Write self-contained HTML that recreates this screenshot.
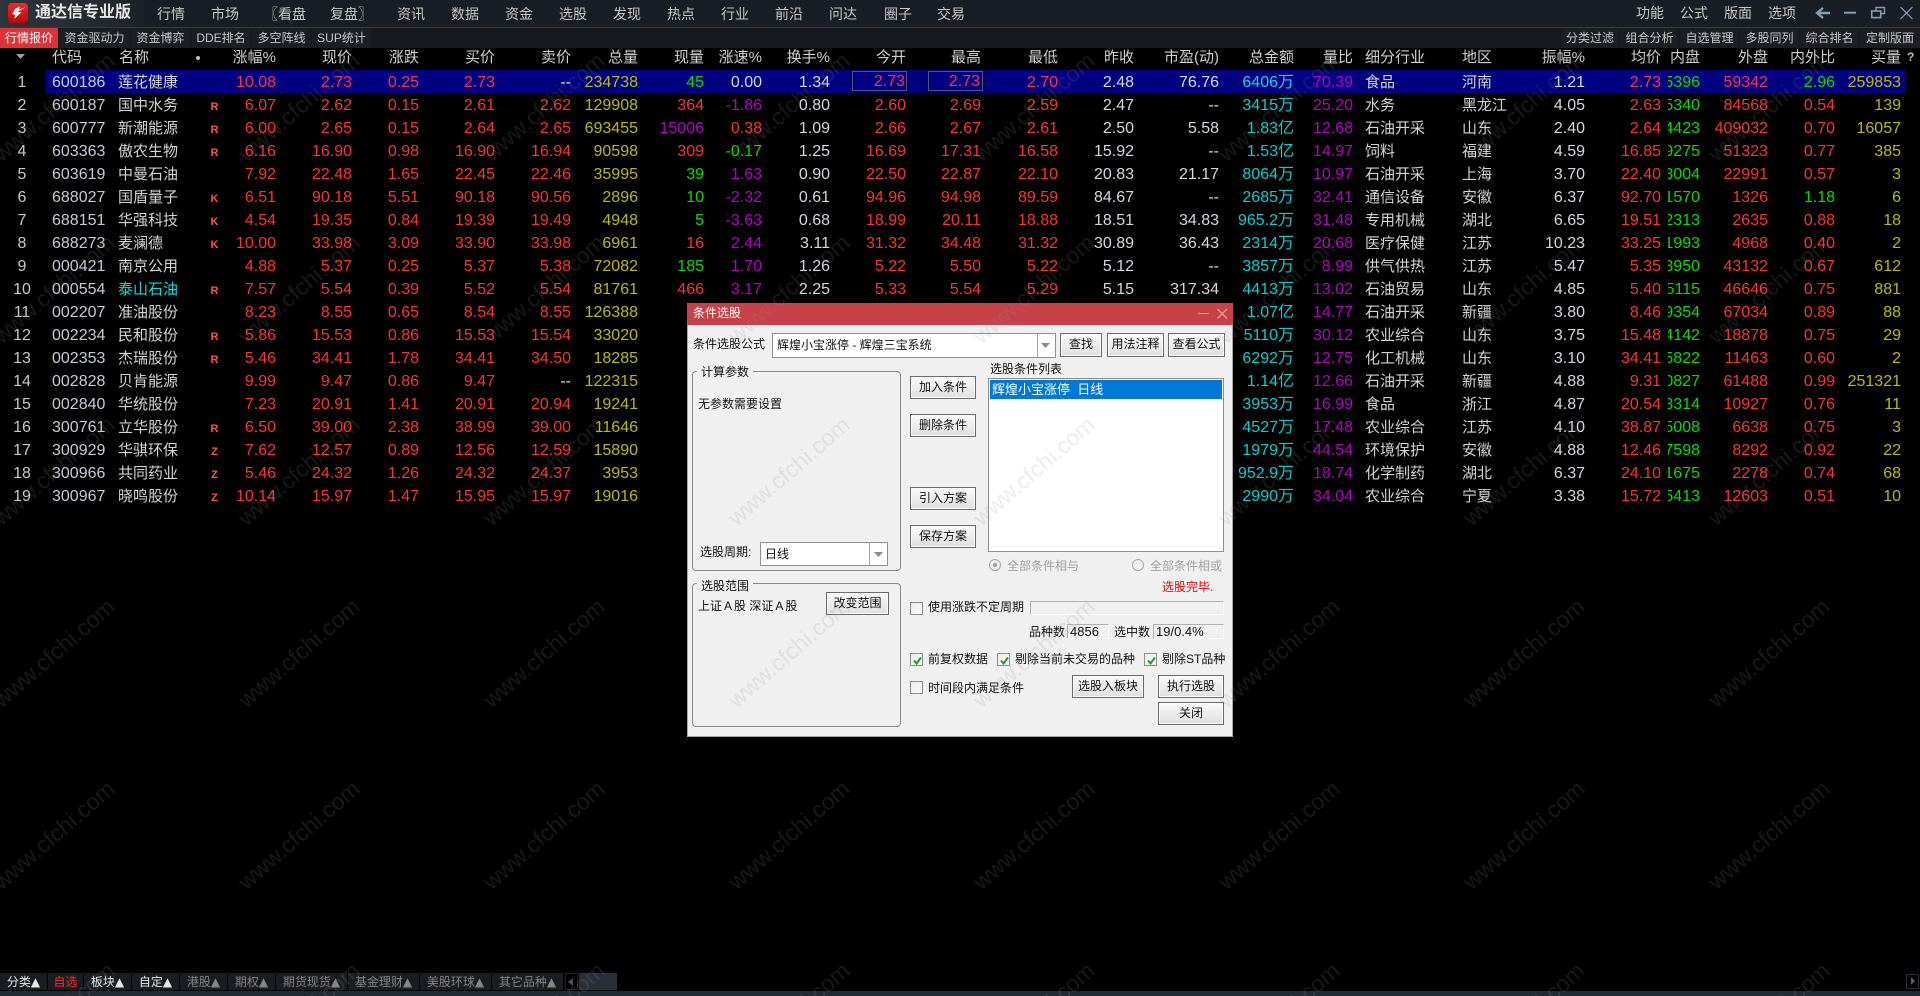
<!DOCTYPE html>
<html lang="zh"><head><meta charset="utf-8"><title>通达信专业版</title>
<style>
html,body{margin:0;padding:0;background:#000;width:1920px;height:996px;overflow:hidden}
*{box-sizing:border-box}
body{position:relative;font-family:"Liberation Sans","Noto Sans CJK SC",sans-serif;color:#ccc}
.a{position:absolute;white-space:nowrap}
.m{position:absolute;top:4px;font-size:14px;line-height:20px;color:#c8c8c8;white-space:nowrap}
.t{position:absolute;top:28px;height:20px;background:#1b1e23;color:#c8c8c8;font-size:12px;line-height:20px;text-align:center;white-space:nowrap}
table{position:absolute;left:0;top:45px;width:1920px;border-collapse:collapse;table-layout:fixed}
th,td{padding:0;height:23px;line-height:23px;font-size:16px;font-weight:normal;text-align:right;white-space:nowrap}
th{height:26px;line-height:25px;font-size:15px;color:#cfcfcf;vertical-align:top}
td:nth-child(1){text-align:center;color:#c8c8c8}
td:nth-child(2){color:#c4ccd4;text-align:left;padding-left:8px}
td:nth-child(3){color:#d4d4d4;font-size:15px;text-align:left;padding-left:2px}
td:nth-child(4){color:#ff5050;font-size:11px;font-weight:bold;text-align:center;position:relative;top:2px}
td:nth-child(5),td:nth-child(6),td:nth-child(7),td:nth-child(8),td:nth-child(9),td:nth-child(14),td:nth-child(15),td:nth-child(16),td:nth-child(24),td:nth-child(26),td:nth-child(27){color:#ff3232}
td:nth-child(10),td:nth-child(28){color:#bcbc00}
td:nth-child(13),td:nth-child(17),td:nth-child(18),td:nth-child(23){color:#d4d8dc}
td:nth-child(19){color:#00d2d2}
td:nth-child(20){color:#b400c4}
td:nth-child(21){color:#d4d4d4;font-size:15px;text-align:left;padding-left:12px}
td:nth-child(22){color:#d4d4d4;font-size:15px;text-align:left;padding-left:0}
td:nth-child(25){color:#00e000;padding-left:7px}
td i{display:block;font-style:normal;width:32px;overflow:hidden;direction:rtl}
th.l{text-align:left}
td.R{color:#ff3232!important}td.G{color:#00e000!important}td.P{color:#b400c4!important}td.W{color:#d4d8dc!important}
tr.s td:nth-child(5),tr.s td:nth-child(6),tr.s td:nth-child(7),tr.s td:nth-child(8),tr.s td:nth-child(14),tr.s td:nth-child(15),tr.s td:nth-child(16),tr.s td:nth-child(24),tr.s td:nth-child(26){color:#ff3050}
tr.s td:nth-child(14),tr.s td:nth-child(15){position:relative;top:-1px;padding-right:1px}
tr.s td:nth-child(19){color:#00d8f0}
.c{color:#00e0e0!important}
.d{position:absolute;left:687px;top:303px;width:546px;height:434px;background:#f0f0f0;border:1px solid #a8a8a8;border-top:0}
.x{position:absolute;font-size:12px;line-height:20px;height:20px;color:#111;white-space:nowrap}
.b{position:absolute;border:1px solid #6a6a6a;box-shadow:inset 0 0 0 1px #fbfbfb;background:linear-gradient(#fafafa,#dfdfdf);text-align:center;font-size:12px;color:#111;white-space:nowrap}
.g{position:absolute;border:1px solid #8a8a8a;border-radius:4px}
.gl{position:absolute;background:#f0f0f0;padding:0 4px;font-size:12px;line-height:14px;color:#111;white-space:nowrap}
.w{position:absolute;background:#fff;border:1px solid #8f8f8f;font-size:12px;color:#111;white-space:nowrap}
.ck{position:absolute;width:13px;height:13px;border:1px solid #8d8d8d;background:linear-gradient(135deg,#ececec,#fafafa)}
.ck svg{position:absolute;left:1px;top:1px}
.f{position:absolute;border:1px solid;border-color:#b0b0b0 #fafafa #fafafa #b0b0b0;background:#f0f0f0;font-size:13px;line-height:14px;color:#111;padding-left:2px;white-space:nowrap}
.q{position:absolute;top:973px;height:17px;background:#1a1c21;font-size:12px;line-height:18px;text-align:center;color:#858585;white-space:nowrap}
.q b{font-family:"DejaVu Sans",sans-serif;font-weight:normal;font-size:12px}
</style></head><body>

<!-- top bar -->
<div class="a" style="left:0;top:0;width:1920px;height:27px;background:#191d25"></div>
<div class="a" style="left:0;top:0;width:144px;height:27px;background:linear-gradient(90deg,#2f343c,#252930 70%,#1c2028)"></div>
<div class="a" style="left:0;top:27px;width:1920px;height:1px;background:#363a41"></div>
<svg class="a" style="left:0;top:0" width="34" height="27" viewBox="0 0 34 27">
<defs><linearGradient id="lg" x1="0" y1="0" x2="0" y2="1"><stop offset="0" stop-color="#f02a2a"/><stop offset="1" stop-color="#b80a0a"/></linearGradient></defs>
<rect x="8" y="3" width="20" height="20" rx="4" fill="url(#lg)"/>
<path d="M26 7 L19 9.6 L19.8 6.6 L15.2 8.8 L12.2 14 L15.4 15 L14 19 L21.4 12.4 L17.4 12 Z" fill="#fff"/>
</svg>
<div class="a" style="left:35px;top:3px;font-size:16px;line-height:20px;font-weight:bold;color:#e6e6e6">通达信专业版</div>
<span class="m" style="left:157px">行情</span><span class="m" style="left:211px">市场</span><span class="m" style="left:264px">〖看盘</span><span class="m" style="left:330px">复盘〗</span><span class="m" style="left:397px">资讯</span><span class="m" style="left:451px">数据</span><span class="m" style="left:505px">资金</span><span class="m" style="left:559px">选股</span><span class="m" style="left:613px">发现</span><span class="m" style="left:667px">热点</span><span class="m" style="left:721px">行业</span><span class="m" style="left:775px">前沿</span><span class="m" style="left:829px">问达</span><span class="m" style="left:884px">圈子</span><span class="m" style="left:937px">交易</span>
<span class="m" style="left:1636px;top:3px">功能</span><span class="m" style="left:1680px;top:3px">公式</span><span class="m" style="left:1724px;top:3px">版面</span><span class="m" style="left:1768px;top:3px">选项</span>
<svg class="a" style="left:1810px;top:0" width="110" height="27" viewBox="1810 0 110 27" fill="none" stroke="#8a9db0">
<path d="M1830 13H1817M1823 8L1817 13L1823 18" stroke-width="2.4"/>
<path d="M1844 12.7H1856" stroke-width="2"/>
<path d="M1876 10.5V7.5H1884.5V13.5H1881" stroke-width="1.4"/><rect x="1871.7" y="11" width="9" height="6.6" stroke-width="1.6"/>
<path d="M1900.5 7L1912.5 19M1912.5 7L1900.5 19" stroke-width="1.2"/>
</svg>

<!-- second bar -->
<div class="a" style="left:0;top:28px;width:1920px;height:20px;background:#17191e"></div>
<div class="t" style="left:0;width:58px;background:#dd3338;color:#fff">行情报价</div>
<div class="t" style="left:59px;width:71px">资金驱动力</div>
<div class="t" style="left:131px;width:59px">资金博弈</div>
<div class="t" style="left:191px;width:60px">DDE排名</div>
<div class="t" style="left:252px;width:59px">多空阵线</div>
<div class="t" style="left:312px;width:59px">SUP统计</div>
<div class="t" style="left:1561px;width:58px">分类过滤</div>
<div class="t" style="left:1620px;width:59px">组合分析</div>
<div class="t" style="left:1680px;width:59px">自选管理</div>
<div class="t" style="left:1740px;width:59px">多股同列</div>
<div class="t" style="left:1800px;width:59px">综合排名</div>
<div class="t" style="left:1860px;width:60px">定制版面</div>

<!-- grid -->
<div class="a" style="left:45px;top:70px;width:1861px;height:23px;background:#000080"></div>
<div class="a" style="left:852px;top:71px;width:55px;height:20px;border:1px solid #50586a"></div>
<div class="a" style="left:928px;top:71px;width:55px;height:20px;border:1px solid #50586a"></div>
<svg class="a" style="left:16px;top:54px" width="10" height="6"><path d="M0 0H9L4.5 5Z" fill="#a0a0a0"/></svg>
<div class="a" style="left:196px;top:56px;width:4px;height:4px;border-radius:2px;background:#c0c0c0"></div>
<div class="a" style="left:1907px;top:49px;font-size:12px;line-height:16px;color:#c0c0c0;font-weight:bold">?</div>

<table>
<colgroup><col style="width:44px"><col style="width:72px"><col style="width:89px"><col style="width:19px"><col style="width:52px"><col style="width:76px"><col style="width:67px"><col style="width:76px"><col style="width:76px"><col style="width:67px"><col style="width:66px"><col style="width:58px"><col style="width:68px"><col style="width:76px"><col style="width:75px"><col style="width:77px"><col style="width:76px"><col style="width:85px"><col style="width:75px"><col style="width:59px"><col style="width:109px"><col style="width:78px"><col style="width:45px"><col style="width:76px"><col style="width:39px"><col style="width:68px"><col style="width:67px"><col style="width:66px"><col style="width:19px"></colgroup>
<tr><th></th><th class="l" style="padding-left:8px">代码</th><th class="l" style="padding-left:3px">名称</th><th></th><th>涨幅%</th><th>现价</th><th>涨跌</th><th>买价</th><th>卖价</th><th>总量</th><th>现量</th><th>涨速%</th><th>换手%</th><th>今开</th><th>最高</th><th>最低</th><th>昨收</th><th>市盈(动)</th><th>总金额</th><th>量比</th><th class="l" style="padding-left:12px">细分行业</th><th class="l">地区</th><th>振幅%</th><th>均价</th><th>内盘</th><th>外盘</th><th>内外比</th><th>买量</th><th></th></tr>
<tr class="s"><td>1</td><td>600186</td><td>莲花健康</td><td></td><td>10.08</td><td>2.73</td><td>0.25</td><td>2.73</td><td class="W">--</td><td>234738</td><td class="G">45</td><td class="W">0.00</td><td>1.34</td><td>2.73</td><td>2.73</td><td>2.70</td><td>2.48</td><td>76.76</td><td>6406万</td><td>70.39</td><td>食品</td><td>河南</td><td>1.21</td><td>2.73</td><td><i>5396</i></td><td>59342</td><td class="G">2.96</td><td>259853</td><td></td></tr>
<tr><td>2</td><td>600187</td><td>国中水务</td><td>R</td><td>6.07</td><td>2.62</td><td>0.15</td><td>2.61</td><td>2.62</td><td>129908</td><td class="R">364</td><td class="P">-1.86</td><td>0.80</td><td>2.60</td><td>2.69</td><td>2.59</td><td>2.47</td><td>--</td><td>3415万</td><td>25.20</td><td>水务</td><td>黑龙江</td><td>4.05</td><td>2.63</td><td><i>5340</i></td><td>84568</td><td>0.54</td><td>139</td><td></td></tr>
<tr><td>3</td><td>600777</td><td>新潮能源</td><td>R</td><td>6.00</td><td>2.65</td><td>0.15</td><td>2.64</td><td>2.65</td><td>693455</td><td class="P">15006</td><td class="R">0.38</td><td>1.09</td><td>2.66</td><td>2.67</td><td>2.61</td><td>2.50</td><td>5.58</td><td>1.83亿</td><td>12.68</td><td>石油开采</td><td>山东</td><td>2.40</td><td>2.64</td><td><i>4423</i></td><td>409032</td><td>0.70</td><td>16057</td><td></td></tr>
<tr><td>4</td><td>603363</td><td>傲农生物</td><td>R</td><td>6.16</td><td>16.90</td><td>0.98</td><td>16.90</td><td>16.94</td><td>90598</td><td class="R">309</td><td class="G">-0.17</td><td>1.25</td><td>16.69</td><td>17.31</td><td>16.58</td><td>15.92</td><td>--</td><td>1.53亿</td><td>14.97</td><td>饲料</td><td>福建</td><td>4.59</td><td>16.85</td><td><i>9275</i></td><td>51323</td><td>0.77</td><td>385</td><td></td></tr>
<tr><td>5</td><td>603619</td><td>中曼石油</td><td></td><td>7.92</td><td>22.48</td><td>1.65</td><td>22.45</td><td>22.46</td><td>35995</td><td class="G">39</td><td class="P">1.63</td><td>0.90</td><td>22.50</td><td>22.87</td><td>22.10</td><td>20.83</td><td>21.17</td><td>8064万</td><td>10.97</td><td>石油开采</td><td>上海</td><td>3.70</td><td>22.40</td><td><i>3004</i></td><td>22991</td><td>0.57</td><td>3</td><td></td></tr>
<tr><td>6</td><td>688027</td><td>国盾量子</td><td>K</td><td>6.51</td><td>90.18</td><td>5.51</td><td>90.18</td><td>90.56</td><td>2896</td><td class="G">10</td><td class="P">-2.32</td><td>0.61</td><td>94.96</td><td>94.98</td><td>89.59</td><td>84.67</td><td>--</td><td>2685万</td><td>32.41</td><td>通信设备</td><td>安徽</td><td>6.37</td><td>92.70</td><td><i>1570</i></td><td>1326</td><td class="G">1.18</td><td>6</td><td></td></tr>
<tr><td>7</td><td>688151</td><td>华强科技</td><td>K</td><td>4.54</td><td>19.35</td><td>0.84</td><td>19.39</td><td>19.49</td><td>4948</td><td class="G">5</td><td class="P">-3.63</td><td>0.68</td><td>18.99</td><td>20.11</td><td>18.88</td><td>18.51</td><td>34.83</td><td>965.2万</td><td>31.48</td><td>专用机械</td><td>湖北</td><td>6.65</td><td>19.51</td><td><i>2313</i></td><td>2635</td><td>0.88</td><td>18</td><td></td></tr>
<tr><td>8</td><td>688273</td><td>麦澜德</td><td>K</td><td>10.00</td><td>33.98</td><td>3.09</td><td>33.90</td><td>33.98</td><td>6961</td><td class="R">16</td><td class="P">2.44</td><td>3.11</td><td>31.32</td><td>34.48</td><td>31.32</td><td>30.89</td><td>36.43</td><td>2314万</td><td>20.68</td><td>医疗保健</td><td>江苏</td><td>10.23</td><td>33.25</td><td><i>1993</i></td><td>4968</td><td>0.40</td><td>2</td><td></td></tr>
<tr><td>9</td><td>000421</td><td>南京公用</td><td></td><td>4.88</td><td>5.37</td><td>0.25</td><td>5.37</td><td>5.38</td><td>72082</td><td class="G">185</td><td class="P">1.70</td><td>1.26</td><td>5.22</td><td>5.50</td><td>5.22</td><td>5.12</td><td>--</td><td>3857万</td><td>8.99</td><td>供气供热</td><td>江苏</td><td>5.47</td><td>5.35</td><td><i>3950</i></td><td>43132</td><td>0.67</td><td>612</td><td></td></tr>
<tr><td>10</td><td>000554</td><td class="c">泰山石油</td><td>R</td><td>7.57</td><td>5.54</td><td>0.39</td><td>5.52</td><td>5.54</td><td>81761</td><td class="R">466</td><td class="P">3.17</td><td>2.25</td><td>5.33</td><td>5.54</td><td>5.29</td><td>5.15</td><td>317.34</td><td>4413万</td><td>13.02</td><td>石油贸易</td><td>山东</td><td>4.85</td><td>5.40</td><td><i>5115</i></td><td>46646</td><td>0.75</td><td>881</td><td></td></tr>
<tr><td>11</td><td>002207</td><td>准油股份</td><td></td><td>8.23</td><td>8.55</td><td>0.65</td><td>8.54</td><td>8.55</td><td>126388</td><td class="P">7</td><td></td><td></td><td></td><td></td><td></td><td></td><td></td><td>1.07亿</td><td>14.77</td><td>石油开采</td><td>新疆</td><td>3.80</td><td>8.46</td><td><i>9354</i></td><td>67034</td><td>0.89</td><td>88</td><td></td></tr>
<tr><td>12</td><td>002234</td><td>民和股份</td><td>R</td><td>5.86</td><td>15.53</td><td>0.86</td><td>15.53</td><td>15.54</td><td>33020</td><td></td><td></td><td></td><td></td><td></td><td></td><td></td><td></td><td>5110万</td><td>30.12</td><td>农业综合</td><td>山东</td><td>3.75</td><td>15.48</td><td><i>4142</i></td><td>18878</td><td>0.75</td><td>29</td><td></td></tr>
<tr><td>13</td><td>002353</td><td>杰瑞股份</td><td>R</td><td>5.46</td><td>34.41</td><td>1.78</td><td>34.41</td><td>34.50</td><td>18285</td><td></td><td></td><td></td><td></td><td></td><td></td><td></td><td></td><td>6292万</td><td>12.75</td><td>化工机械</td><td>山东</td><td>3.10</td><td>34.41</td><td><i>5822</i></td><td>11463</td><td>0.60</td><td>2</td><td></td></tr>
<tr><td>14</td><td>002828</td><td>贝肯能源</td><td></td><td>9.99</td><td>9.47</td><td>0.86</td><td>9.47</td><td class="W">--</td><td>122315</td><td></td><td></td><td></td><td></td><td></td><td></td><td></td><td></td><td>1.14亿</td><td>12.66</td><td>石油开采</td><td>新疆</td><td>4.88</td><td>9.31</td><td><i>0827</i></td><td>61488</td><td>0.99</td><td>251321</td><td></td></tr>
<tr><td>15</td><td>002840</td><td>华统股份</td><td></td><td>7.23</td><td>20.91</td><td>1.41</td><td>20.91</td><td>20.94</td><td>19241</td><td class="R">2</td><td></td><td></td><td></td><td></td><td></td><td></td><td></td><td>3953万</td><td>16.99</td><td>食品</td><td>浙江</td><td>4.87</td><td>20.54</td><td><i>3314</i></td><td>10927</td><td>0.76</td><td>11</td><td></td></tr>
<tr><td>16</td><td>300761</td><td>立华股份</td><td>R</td><td>6.50</td><td>39.00</td><td>2.38</td><td>38.99</td><td>39.00</td><td>11646</td><td></td><td></td><td></td><td></td><td></td><td></td><td></td><td></td><td>4527万</td><td>17.48</td><td>农业综合</td><td>江苏</td><td>4.10</td><td>38.87</td><td><i>5008</i></td><td>6638</td><td>0.75</td><td>3</td><td></td></tr>
<tr><td>17</td><td>300929</td><td>华骐环保</td><td>Z</td><td>7.62</td><td>12.57</td><td>0.89</td><td>12.56</td><td>12.59</td><td>15890</td><td></td><td></td><td></td><td></td><td></td><td></td><td></td><td></td><td>1979万</td><td>44.54</td><td>环境保护</td><td>安徽</td><td>4.88</td><td>12.46</td><td><i>7598</i></td><td>8292</td><td>0.92</td><td>22</td><td></td></tr>
<tr><td>18</td><td>300966</td><td>共同药业</td><td>Z</td><td>5.46</td><td>24.32</td><td>1.26</td><td>24.32</td><td>24.37</td><td>3953</td><td></td><td></td><td></td><td></td><td></td><td></td><td></td><td></td><td>952.9万</td><td>18.74</td><td>化学制药</td><td>湖北</td><td>6.37</td><td>24.10</td><td><i>1675</i></td><td>2278</td><td>0.74</td><td>68</td><td></td></tr>
<tr><td>19</td><td>300967</td><td>晓鸣股份</td><td>Z</td><td>10.14</td><td>15.97</td><td>1.47</td><td>15.95</td><td>15.97</td><td>19016</td><td class="R">1</td><td></td><td></td><td></td><td></td><td></td><td></td><td></td><td>2990万</td><td>34.04</td><td>农业综合</td><td>宁夏</td><td>3.38</td><td>15.72</td><td><i>5413</i></td><td>12603</td><td>0.51</td><td>10</td><td></td></tr>
</table>

<!-- dialog -->
<div class="d"></div>
<div class="a" style="left:687px;top:303px;width:546px;height:22px;background:#c84148"></div>
<div class="a" style="left:693px;top:303px;font-size:12px;line-height:21px;color:#fff">条件选股</div>
<svg class="a" style="left:1190px;top:303px" width="43" height="22" fill="none" stroke="#e8b8bb"><path d="M8 10.5H18.5"/><path d="M27.5 6L37 15.5M37 6L27.5 15.5"/></svg>

<div class="x" style="left:693px;top:334px">条件选股公式</div>
<div class="w" style="left:772px;top:333px;width:284px;height:25px;line-height:23px;padding-left:4px">辉煌小宝涨停 - 辉煌三宝系统</div>
<div class="a" style="left:1037px;top:334px;width:1px;height:23px;background:#a8a8a8"></div>
<svg class="a" style="left:1041px;top:343px" width="10" height="6"><path d="M0 0H9L4.5 5Z" fill="#8a8a8a"/></svg>
<div class="b" style="left:1060px;top:333px;width:42px;height:24px;line-height:21px">查找</div>
<div class="b" style="left:1107px;top:333px;width:57px;height:24px;line-height:21px">用法注释</div>
<div class="b" style="left:1168px;top:333px;width:57px;height:24px;line-height:21px">查看公式</div>

<div class="g" style="left:692px;top:371px;width:209px;height:200px"></div>
<div class="gl" style="left:697px;top:365px">计算参数</div>
<div class="x" style="left:698px;top:394px">无参数需要设置</div>
<div class="x" style="left:700px;top:542px">选股周期:</div>
<div class="w" style="left:760px;top:542px;width:128px;height:24px;line-height:22px;padding-left:4px">日线</div>
<div class="a" style="left:869px;top:543px;width:1px;height:22px;background:#a8a8a8"></div>
<svg class="a" style="left:874px;top:552px" width="10" height="6"><path d="M0 0H9L4.5 5Z" fill="#8a8a8a"/></svg>

<div class="g" style="left:692px;top:583px;width:209px;height:144px"></div>
<div class="gl" style="left:697px;top:579px">选股范围</div>
<div class="x" style="left:698px;top:596px">上证<span style="margin:0 2px">A</span>股 深证<span style="margin:0 2px">A</span>股</div>
<div class="b" style="left:826px;top:592px;width:63px;height:23px;line-height:20px">改变范围</div>

<div class="b" style="left:910px;top:376px;width:66px;height:23px;line-height:20px">加入条件</div>
<div class="b" style="left:910px;top:414px;width:66px;height:23px;line-height:20px">删除条件</div>
<div class="b" style="left:910px;top:487px;width:66px;height:23px;line-height:20px">引入方案</div>
<div class="b" style="left:910px;top:525px;width:66px;height:23px;line-height:20px">保存方案</div>

<div class="x" style="left:990px;top:359px">选股条件列表</div>
<div class="w" style="left:988px;top:378px;width:236px;height:174px"></div>
<div class="a" style="left:990px;top:380px;width:232px;height:19px;background:#0078d7;color:#fff;font-size:13px;line-height:19px;padding-left:2px">辉煌小宝涨停&nbsp; 日线</div>

<svg class="a" style="left:988px;top:558px" width="14" height="14"><circle cx="7" cy="7" r="5.5" fill="#f0f0f0" stroke="#a8a8a8"/><circle cx="7" cy="7" r="2.2" fill="#a0a0a0"/></svg>
<div class="x" style="left:1007px;top:556px;color:#a0a0a0">全部条件相与</div>
<svg class="a" style="left:1131px;top:558px" width="14" height="14"><circle cx="7" cy="7" r="5.5" fill="#f0f0f0" stroke="#a8a8a8"/></svg>
<div class="x" style="left:1150px;top:556px;color:#a0a0a0">全部条件相或</div>
<div class="x" style="left:1162px;top:577px;color:#f00000">选股完毕.</div>

<div class="ck" style="left:910px;top:602px"></div>
<div class="x" style="left:928px;top:597px">使用涨跌不定周期</div>
<div class="f" style="left:1030px;top:601px;width:194px;height:14px"></div>
<div class="x" style="left:1029px;top:622px">品种数</div>
<div class="f" style="left:1067px;top:624px;width:42px;height:15px">4856</div>
<div class="x" style="left:1114px;top:622px">选中数</div>
<div class="f" style="left:1153px;top:624px;width:71px;height:15px">19/0.4%</div>

<div class="ck" style="left:910px;top:653px"><svg width="11" height="11"><path d="M2 5.5L4.5 8.5L9 2.5" fill="none" stroke="#1a9e2c" stroke-width="2"/></svg></div>
<div class="x" style="left:928px;top:649px">前复权数据</div>
<div class="ck" style="left:997px;top:653px"><svg width="11" height="11"><path d="M2 5.5L4.5 8.5L9 2.5" fill="none" stroke="#1a9e2c" stroke-width="2"/></svg></div>
<div class="x" style="left:1015px;top:649px">剔除当前未交易的品种</div>
<div class="ck" style="left:1144px;top:653px"><svg width="11" height="11"><path d="M2 5.5L4.5 8.5L9 2.5" fill="none" stroke="#1a9e2c" stroke-width="2"/></svg></div>
<div class="x" style="left:1162px;top:649px">剔除ST品种</div>
<div class="ck" style="left:910px;top:681px"></div>
<div class="x" style="left:928px;top:678px">时间段内满足条件</div>
<div class="b" style="left:1072px;top:675px;width:72px;height:23px;line-height:20px">选股入板块</div>
<div class="b" style="left:1158px;top:675px;width:66px;height:23px;line-height:20px">执行选股</div>
<div class="b" style="left:1158px;top:702px;width:66px;height:23px;line-height:20px">关闭</div>

<!-- bottom tabs -->
<div class="q" style="left:0;width:47px;color:#e8e8e8">分类<b>▲</b></div>
<div class="q" style="left:48px;width:35px;color:#f03030">自选</div>
<div class="q" style="left:84px;width:47px;color:#e8e8e8">板块<b>▲</b></div>
<div class="q" style="left:132px;width:47px;color:#e8e8e8">自定<b>▲</b></div>
<div class="q" style="left:180px;width:47px">港股<b>▲</b></div>
<div class="q" style="left:228px;width:47px">期权<b>▲</b></div>
<div class="q" style="left:276px;width:71px">期货现货<b>▲</b></div>
<div class="q" style="left:348px;width:71px">基金理财<b>▲</b></div>
<div class="q" style="left:420px;width:71px">美股环球<b>▲</b></div>
<div class="q" style="left:492px;width:71px">其它品种<b>▲</b></div>
<div class="a" style="left:565px;top:973px;width:13px;height:17px;border:1px solid #22252e"></div>
<svg class="a" style="left:568px;top:978px" width="6" height="8"><path d="M5 0V8L0 4Z" fill="#505050"/></svg>
<div class="a" style="left:579px;top:973px;width:38px;height:17px;background:#2a2e38"></div>
<div class="a" style="left:1906px;top:974px;width:13px;height:15px;border:1px solid #2a2e38"></div>
<svg class="a" style="left:1910px;top:977px" width="6" height="9"><path d="M1 0V8L5 4Z" fill="#606060"/></svg>
<div class="a" style="left:0;top:991px;width:1920px;height:5px;background:#222a32"></div>

<!-- watermark -->
<svg class="a" style="left:0;top:0;pointer-events:none" width="1920" height="996">
<defs><pattern id="wm" width="245" height="182" patternUnits="userSpaceOnUse" patternTransform="translate(182,22)">
<text x="0" y="0" transform="translate(122,91) rotate(-41)" text-anchor="middle" font-family="Liberation Sans, sans-serif" font-size="23" fill="rgba(140,140,140,.17)">www.cfchi.com</text>
</pattern></defs>
<rect width="1920" height="996" fill="url(#wm)"/>
</svg>
</body></html>
